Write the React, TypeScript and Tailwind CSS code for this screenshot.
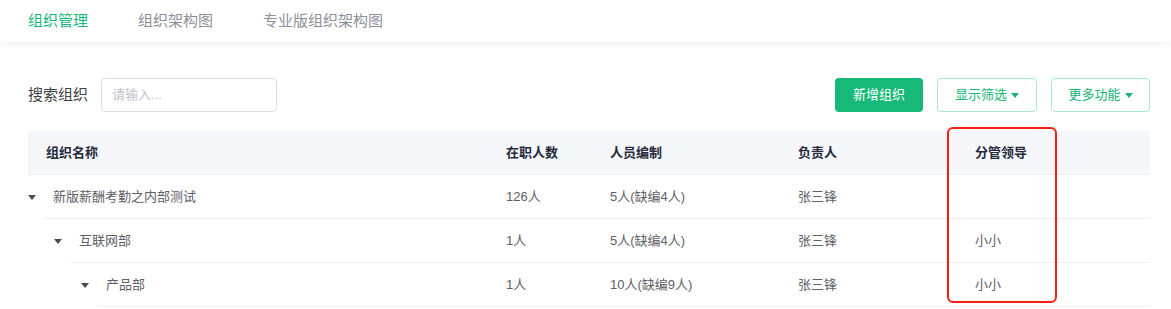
import React from 'react'

const font = { fontFamily: '"Liberation Sans", "Noto Sans CJK SC", sans-serif' }

type Row = {
  level: number
  name: string
  count: string
  quota: string
  owner: string
  leader: string
}

const rows: Row[] = [
  { level: 0, name: '新版薪酬考勤之内部测试', count: '126人', quota: '5人(缺编4人)', owner: '张三锋', leader: '' },
  { level: 1, name: '互联网部', count: '1人', quota: '5人(缺编4人)', owner: '张三锋', leader: '小小' },
  { level: 2, name: '产品部', count: '1人', quota: '10人(缺编9人)', owner: '张三锋', leader: '小小' },
]

const Caret = ({ className }: { className?: string }) => (
  <svg width="8" height="5" viewBox="0 0 8 5" className={className}>
    <path d="M0 0h8L4 5z" fill="currentColor" />
  </svg>
)

const indents = ['w-0', 'w-[26px]', 'w-[53px]']

export default function App() {
  return (
    <div className="w-[1171px] h-[309px] bg-white overflow-hidden" style={font}>
      <div className="relative z-10 h-[42px] flex items-center gap-[50px] pl-[28px] bg-white shadow-[0_3px_8px_rgba(0,0,0,0.05)] text-[15px]">
        <span className="text-[#17b67a]">组织管理</span>
        <span className="text-[#8e9099]">组织架构图</span>
        <span className="text-[#8e9099]">专业版组织架构图</span>
      </div>

      <div className="pl-[28px] pr-[21px]">
        <div className="mt-[36px] flex items-center justify-between">
          <div className="flex items-center gap-[13px]">
            <span className="text-[15px] text-[#3d3f45]">搜索组织</span>
            <div className="w-[176px] h-[34px] border border-[#dcdfe6] rounded-[4px] flex items-center pl-[10px]">
              <span className="text-[13px] text-[#c0c4cc]">请输入...</span>
            </div>
          </div>
          <div className="flex items-center gap-[14px] text-[13px]">
            <button className="w-[88px] h-[34px] rounded-[4px] bg-[#17b978] text-white">新增组织</button>
            <button className="w-[100px] h-[34px] rounded-[4px] border border-[#a6e8cd] text-[#17b476] flex items-center justify-center gap-[4px]">
              显示筛选
              <Caret />
            </button>
            <button className="w-[99px] h-[34px] rounded-[4px] border border-[#a6e8cd] text-[#17b476] flex items-center justify-center gap-[4px]">
              更多功能
              <Caret />
            </button>
          </div>
        </div>

        <div className="relative mt-[19px]">
          <div className="h-[44px] flex items-center bg-[#f5f7fa] border-b border-[#eef0f4] text-[13px] font-semibold text-[#252b3a]">
            <div className="flex-1 pl-[18px]">组织名称</div>
            <div className="w-[104px] pl-[18px]">在职人数</div>
            <div className="w-[188px] pl-[18px]">人员编制</div>
            <div className="w-[177px] pl-[18px]">负责人</div>
            <div className="w-[193px] pl-[18px]">分管领导</div>
          </div>

          {rows.map((r) => (
            <div key={r.name} className="h-[44px] flex text-[13px] text-[#5f6168]">
              <div className={`${indents[r.level]} shrink-0`} />
              <div className="w-[17px] shrink-0 flex items-center">
                <Caret className="text-[#4a4d57]" />
              </div>
              <div className="flex-1 flex items-center border-b border-[#eef0f3]">
                <div className="flex-1 pl-[8px]">{r.name}</div>
                <div className="w-[104px] pl-[18px]">{r.count}</div>
                <div className="w-[188px] pl-[18px]">{r.quota}</div>
                <div className="w-[177px] pl-[18px]">{r.owner}</div>
                <div className="w-[193px] pl-[18px]">{r.leader}</div>
              </div>
            </div>
          ))}

          <div className="absolute left-[919px] top-[-4px] w-[110px] h-[176px] border-[2.5px] border-[#fb1d0f] rounded-[6px] pointer-events-none" />
        </div>
      </div>
    </div>
  )
}
